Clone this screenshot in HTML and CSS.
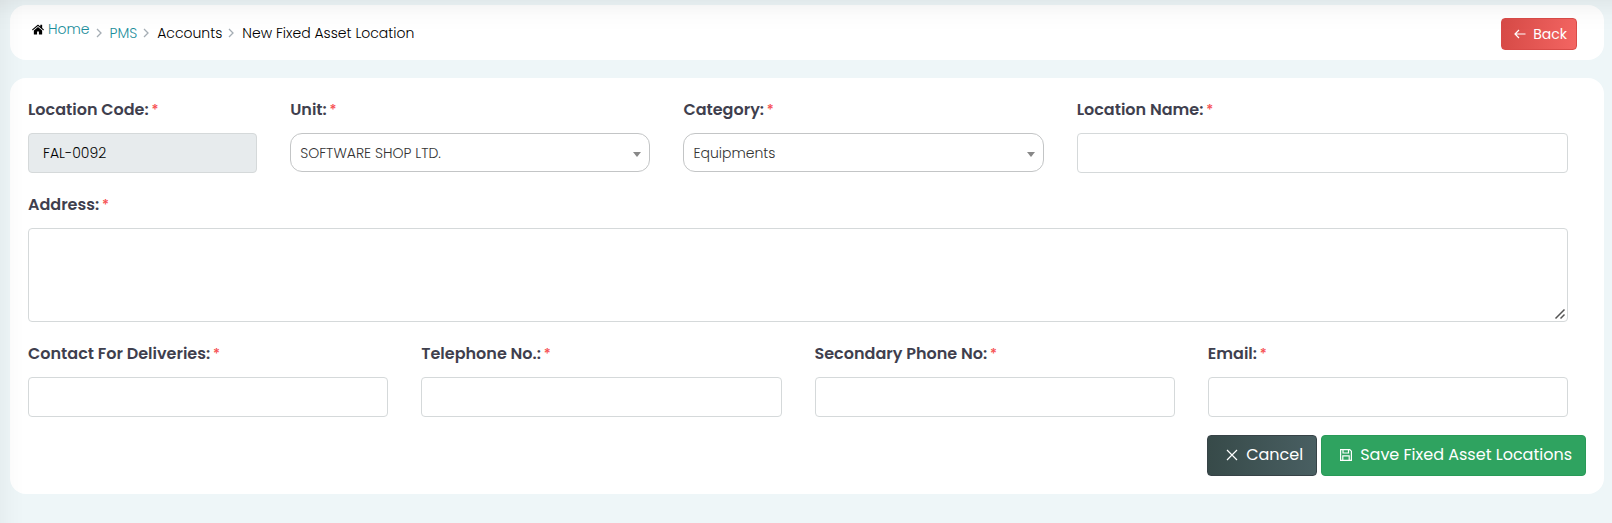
FILE: index.html
```html
<!DOCTYPE html>
<html lang="en">
<head>
<meta charset="utf-8">
<meta name="viewport" content="width=device-width, initial-scale=1">
<title>New Fixed Asset Location</title>
<link rel="stylesheet" href="styles.css">
</head>
<body>
<main class="page">
  <header class="card topbar">
    <nav aria-label="Breadcrumb">
      <ol class="breadcrumb">
        <li class="crumb crumb-home">
          <svg class="home-icon" viewBox="0 0 26 22" aria-hidden="true"><path d="M13 5.5 4 13v8.2c0 .5.3.8.8.8H11v-6.500h4V22h6.200c.5 0 .8-.3.8-.8V13z"/><path d="M25.700 10.800 22 7.700V1.500c0-.4-.2-.6-.6-.6h-2.800c-.4 0-.6.2-.6.6v2.900L14.300 1.300c-.8-.6-1.800-.6-2.600 0L.3 10.800c-.2.200-.3.600-.1.800l.9 1.100c.2.300.6.300.8.100L13 3.600l11.100 9.200c.3.200.6.200.8-.1l.9-1.100c.2-.2.200-.6-.1-.8z"/></svg>
          <a href="#">Home</a>
        </li>
        <li class="crumb">
          <svg class="chevron" viewBox="0 0 6 10" aria-hidden="true"><path d="M1 1l4 4-4 4"/></svg>
          <a href="#">PMS</a>
        </li>
        <li class="crumb">
          <svg class="chevron" viewBox="0 0 6 10" aria-hidden="true"><path d="M1 1l4 4-4 4"/></svg>
          Accounts
        </li>
        <li class="crumb" aria-current="page">
          <svg class="chevron" viewBox="0 0 6 10" aria-hidden="true"><path d="M1 1l4 4-4 4"/></svg>
          New Fixed Asset Location
        </li>
      </ol>
    </nav>
    <button type="button" class="btn btn-back">
      <svg class="btn-icon" viewBox="0 0 12 12" aria-hidden="true"><path d="M11.500 6H1M5 2 1 6l4 4"/></svg>
      Back
    </button>
  </header>

  <form class="card form">
    <div class="fields">
      <div class="field span-2">
        <label for="code">Location Code: <span class="required">*</span></label>
        <input id="code" class="control" type="text" value="FAL-0092" readonly>
      </div>
      <div class="field span-3">
        <label for="unit">Unit: <span class="required">*</span></label>
        <div class="select-wrap">
          <select id="unit" class="select"><option>SOFTWARE SHOP LTD.</option></select>
        </div>
      </div>
      <div class="field span-3">
        <label for="category">Category: <span class="required">*</span></label>
        <div class="select-wrap">
          <select id="category" class="select"><option>Equipments</option></select>
        </div>
      </div>
      <div class="field span-4">
        <label for="name">Location Name: <span class="required">*</span></label>
        <input id="name" class="control" type="text">
      </div>
      <div class="field span-12">
        <label for="address">Address: <span class="required">*</span></label>
        <textarea id="address" class="control textarea"></textarea>
      </div>
      <div class="field span-3">
        <label for="contact">Contact For Deliveries: <span class="required">*</span></label>
        <input id="contact" class="control" type="text">
      </div>
      <div class="field span-3">
        <label for="phone">Telephone No.: <span class="required">*</span></label>
        <input id="phone" class="control" type="tel">
      </div>
      <div class="field span-3">
        <label for="phone2">Secondary Phone No: <span class="required">*</span></label>
        <input id="phone2" class="control" type="tel">
      </div>
      <div class="field span-3">
        <label for="email">Email: <span class="required">*</span></label>
        <input id="email" class="control" type="email">
      </div>
    </div>
    <div class="actions">
      <button type="button" class="btn btn-large btn-cancel">
        <svg class="btn-icon" viewBox="0 0 12 12" aria-hidden="true"><path d="M1 1l10 10M11 1 1 11"/></svg>
        Cancel
      </button>
      <button type="submit" class="btn btn-large btn-save">
        <svg class="btn-icon" viewBox="0 0 12 12" aria-hidden="true"><path d="M.6.6h9.200l1.600 1.600v9.200H.6zM3 .6v3.400h5.500V.6M2.800 11.400V6.800h6.400v4.600"/></svg>
        Save Fixed Asset Locations
      </button>
    </div>
  </form>
</main>
</body>
</html>
```
FILE: styles.css
```css
* {
  box-sizing: border-box;
}

body {
  margin: 0;
  min-height: 100vh;
  background: #eef6f8;
  color: #000;
  font-family: Poppins, Inter, "Open Sans", sans-serif;
  font-size: 14px;
  line-height: 20px;
}

body::after {
  content: "";
  position: fixed;
  inset: 0;
  pointer-events: none;
  background:
    linear-gradient(to bottom, rgba(0, 0, 0, 0.05), rgba(0, 0, 0, 0.01) 16px, transparent 32px),
    linear-gradient(to right, rgba(0, 0, 0, 0.03), rgba(0, 0, 0, 0.01) 12px, transparent 24px);
}

.page {
  display: flex;
  flex-direction: column;
  gap: 18px;
  padding: 5px 8px 28px 10px;
}

.card {
  background: #fff;
  border-radius: 16px;
}

.topbar {
  display: flex;
  align-items: center;
  justify-content: space-between;
  padding: 13px 27px 10px 22px;
}

.breadcrumb {
  display: flex;
  align-items: center;
  margin: 0;
  padding: 0 0 2px;
  list-style: none;
  font-weight: 300;
}

.crumb {
  display: flex;
  align-items: center;
  gap: 8px;
  margin-right: 6px;
}

.crumb-home {
  gap: 4px;
  padding-bottom: 8px;
}

.crumb a {
  color: #1b8d9b;
  text-decoration: none;
}

.home-icon {
  width: 12px;
  height: 11px;
}

.chevron {
  width: 6px;
  height: 10px;
  fill: none;
  stroke: #a5adb4;
  stroke-width: 1.3;
}

.btn {
  display: inline-flex;
  align-items: center;
  gap: 7px;
  padding: 5px 9px 5px 12px;
  border: 1px solid;
  border-radius: 4px;
  color: #fff;
  font: 400 14px/20px Poppins, Inter, "Open Sans", sans-serif;
  cursor: pointer;
}

.btn-icon {
  width: 12px;
  height: 12px;
  fill: none;
  stroke: currentColor;
  stroke-width: 1.2;
}

.btn-back {
  background: linear-gradient(to right, #d74b47, #f36562);
  border-color: #d94b48;
}

.btn-large {
  gap: 8px;
  padding: 8px 13px 9px 18px;
  font-size: 16px;
  line-height: 22px;
}

.btn-cancel {
  background: linear-gradient(to right, #374a49, #495f62);
  border-color: #374347;
}

.btn-save {
  background: #2fa360;
  border-color: #299a58;
}

.form {
  padding: 20px 18px 18px;
}

.fields {
  display: grid;
  grid-template-columns: repeat(12, minmax(0, 1fr));
  gap: 20px 33px;
  padding-right: 18px;
}

.field {
  display: flex;
  flex-direction: column;
  gap: 11px;
}

.span-2 { grid-column: span 2; }
.span-3 { grid-column: span 3; }
.span-4 { grid-column: span 4; }
.span-12 { grid-column: span 12; }

label {
  color: #3f3f4e;
  font-size: 16px;
  font-weight: 600;
  line-height: 24px;
  white-space: nowrap;
}

.required {
  margin-left: -1px;
  color: #f64e50;
  font-size: 14px;
  font-weight: 500;
}

.control {
  display: block;
  width: 100%;
  height: 40px;
  padding: 0 14px;
  border: 1px solid #d5d9da;
  border-radius: 4px;
  background: #fff;
  color: #000;
  font: 300 14px/20px Poppins, Inter, "Open Sans", sans-serif;
}

.control:read-only {
  background: #e7ebed;
}

.textarea {
  height: 94px;
  padding: 8px 14px;
  resize: vertical;
}

.textarea::-webkit-resizer {
  background: url("data:image/svg+xml,%3Csvg xmlns='http://www.w3.org/2000/svg' width='15' height='15'%3E%3Cpath d='M3.500 12.500l9-9M8.500 12.500l4-4' stroke='%23555' stroke-width='1.500'/%3E%3C/svg%3E") no-repeat;
}

.select-wrap {
  position: relative;
}

.select-wrap::after {
  content: "";
  position: absolute;
  top: 19px;
  right: 9px;
  border: 4px solid transparent;
  border-top: 5px solid #888;
  border-bottom: 0;
  pointer-events: none;
}

.select {
  appearance: none;
  width: 100%;
  height: 39px;
  padding: 0 24px 0 9px;
  border: 1px solid #c3c5c6;
  border-radius: 12px;
  background: #fff;
  color: #333;
  font: 300 14px/20px Poppins, Inter, "Open Sans", sans-serif;
}

.actions {
  display: flex;
  justify-content: flex-end;
  gap: 4px;
  margin-top: 18px;
}

@media (max-width: 800px) {
  .span-2,
  .span-3,
  .span-4 {
    grid-column: span 12;
  }

  .breadcrumb,
  .actions {
    flex-wrap: wrap;
  }
}
```
